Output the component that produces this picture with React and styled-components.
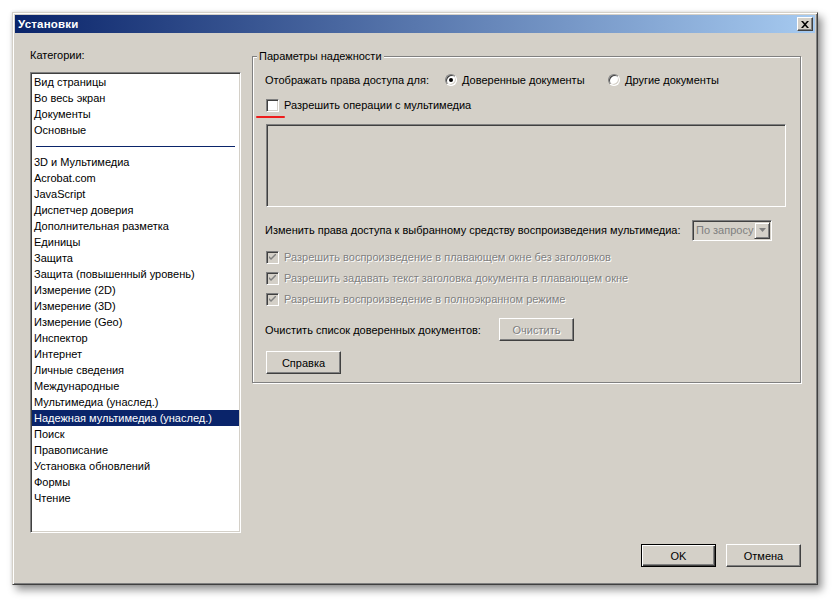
import React from "react";
import styled, { createGlobalStyle, css } from "styled-components";

const FACE = "#d4d0c8";

const GlobalStyle = createGlobalStyle`
  html, body { margin: 0; padding: 0; background: #ffffff; }
  body {
    font-family: "Liberation Sans", Arial, sans-serif;
    font-size: 11px;
    color: #000;
  }
  * { box-sizing: border-box; }
`;

const Page = styled.div`
  padding: 12px 0 0 12px;
  width: 839px;
  height: 605px;
`;

const Window = styled.div`
  width: 806px;
  height: 573px;
  background: ${FACE};
  border: 1px solid;
  border-color: ${FACE} #404040 #404040 ${FACE};
  box-shadow: inset 1px 1px #fff, inset -1px -1px #808080,
    4px 5px 8px rgba(0, 0, 0, 0.42), 0 0 3px rgba(0, 0, 0, 0.12);
  padding: 2px;
  display: flex;
  flex-direction: column;
`;

const TitleBar = styled.div`
  height: 18px;
  flex: none;
  display: flex;
  align-items: center;
  padding: 0 2px 0 3px;
  background: linear-gradient(to right, #0a246a, #a6caf0);
  color: #fff;
  font-weight: bold;
  font-size: 11.5px;
  letter-spacing: 0.2px;
`;

const CloseButton = styled.div`
  margin-left: auto;
  width: 16px;
  height: 14px;
  background: ${FACE};
  border: 1px solid;
  border-color: #fff #404040 #404040 #fff;
  box-shadow: inset -1px -1px #808080;
  display: flex;
  align-items: center;
  justify-content: center;
`;

const Main = styled.div`
  display: flex;
  padding: 15px 0 0 15px;
`;

const LeftColumn = styled.div`
  width: 211px;
  display: flex;
  flex-direction: column;
`;

const Label = styled.div`
  height: 14px;
  line-height: 14px;
  white-space: nowrap;
`;

const ListBox = styled.div`
  margin-top: 10px;
  height: 461px;
  background: #fff;
  border: 1px solid;
  border-color: #808080 #fff #fff #808080;
  box-shadow: inset 1px 1px #404040, inset -1px -1px ${FACE};
  padding: 1px;
  overflow: hidden;
`;

const ListItem = styled.div`
  height: 16px;
  line-height: 16px;
  padding-left: 2px;
  white-space: nowrap;
  ${(p) =>
    p.$selected &&
    css`
      background: #0a246a;
      color: #fff;
    `}
`;

const ListSeparator = styled.div`
  height: 16px;
  padding: 8px 4px 0 4px;
  &::after {
    content: "";
    display: block;
    height: 1px;
    background: #0a246a;
  }
`;

const RightColumn = styled.div`
  margin-left: 11px;
  width: 549px;
  padding-top: 8px;
`;

const GroupBox = styled.div`
  position: relative;
  border: 1px solid #808080;
  box-shadow: 1px 1px 0 #fff, inset 1px 1px 0 #fff;
  padding: 13px 13px 8px 12px;
`;

const GroupLegend = styled.span`
  position: absolute;
  top: -8px;
  left: 4px;
  padding: 0 2px;
  line-height: 14px;
  background: ${FACE};
  white-space: nowrap;
`;

const Row = styled.div`
  position: relative;
  display: flex;
  align-items: center;
  height: ${(p) => p.$h || 20}px;
  margin-top: ${(p) => p.$mt || 0}px;
  white-space: nowrap;
`;

const RowLabel = styled.span`
  width: ${(p) => (p.$w ? `${p.$w}px` : "auto")};
  flex: none;
  white-space: nowrap;
`;

const Option = styled.div`
  display: flex;
  align-items: center;
  width: ${(p) => (p.$w ? `${p.$w}px` : "auto")};
  flex: none;
`;

const Radio = styled.span`
  width: 12px;
  height: 12px;
  border-radius: 50%;
  background: #fff;
  border: 1px solid;
  border-color: #808080 #fff #fff #808080;
  box-shadow: inset 1px 1px #404040, inset -1px -1px ${FACE};
  display: flex;
  align-items: center;
  justify-content: center;
  flex: none;
  &::after {
    content: "";
    display: ${(p) => (p.$checked ? "block" : "none")};
    width: 4px;
    height: 4px;
    border-radius: 50%;
    background: #000;
  }
`;

const Box = styled.span`
  width: 13px;
  height: 13px;
  flex: none;
  margin-left: 1px;
  background: ${(p) => (p.$disabled ? FACE : "#fff")};
  border: 1px solid;
  border-color: #808080 #fff #fff #808080;
  box-shadow: inset 1px 1px #404040, inset -1px -1px ${FACE};
  display: flex;
  align-items: center;
  justify-content: center;
`;

const OptionText = styled.span`
  margin-left: ${(p) => p.$ml || 5}px;
  white-space: nowrap;
  ${(p) =>
    p.$disabled &&
    css`
      color: #808080;
      text-shadow: 1px 1px 0 #fff;
    `}
`;

const RedMark = styled.span`
  position: absolute;
  left: -9px;
  top: 21px;
  width: 29px;
  height: 2px;
  border-radius: 1px;
  background: #ee1c1c;
`;

const SunkenPanel = styled.div`
  margin: 9px 0 0 1px;
  width: 520px;
  height: 83px;
  border: 1px solid;
  border-color: #808080 #fff #fff #808080;
  box-shadow: inset 1px 1px #404040, inset -1px -1px ${FACE};
`;

const Select = styled.div`
  margin-left: auto;
  margin-right: 15px;
  width: 80px;
  height: 21px;
  border: 1px solid;
  border-color: #808080 #fff #fff #808080;
  box-shadow: inset 1px 1px #404040, inset -1px -1px ${FACE};
  padding: 1px 1px 1px 2px;
  display: flex;
  align-items: center;
  background: ${FACE};
`;

const SelectText = styled.span`
  flex: 1;
  padding-left: 1px;
  color: #808080;
  white-space: nowrap;
`;

const SelectArrow = styled.span`
  width: 16px;
  height: 17px;
  flex: none;
  background: ${FACE};
  border: 1px solid;
  border-color: ${FACE} #404040 #404040 ${FACE};
  box-shadow: inset 1px 1px #fff, inset -1px -1px #808080;
  display: flex;
  align-items: center;
  justify-content: center;
`;

const Button = styled.div`
  width: 75px;
  height: 23px;
  flex: none;
  display: flex;
  align-items: center;
  justify-content: center;
  background: ${FACE};
  border: 1px solid;
  border-color: #fff #404040 #404040 #fff;
  box-shadow: inset -1px -1px #808080;
  white-space: nowrap;
  margin-left: ${(p) => p.$ml || 0}px;
  ${(p) =>
    p.$default &&
    css`
      border: 1px solid #000;
      box-shadow: inset 1px 1px #fff, inset -1px -1px #404040,
        inset -2px -2px #808080;
    `}
  ${(p) =>
    p.$disabled &&
    css`
      color: #808080;
      text-shadow: 1px 1px 0 #fff;
    `}
`;

const Footer = styled.div`
  display: flex;
  justify-content: flex-end;
  gap: 10px;
  margin-top: 11px;
  padding-right: 14px;
`;

const CheckMark = ({ color }) => (
  <svg width="7" height="7" viewBox="0 0 7 7">
    <path d="M0 2 L0 4 L2 6 L7 1 L7 -1 L2 4 Z" fill={color} />
  </svg>
);

const categoriesTop = ["Вид страницы", "Во весь экран", "Документы", "Основные"];
const categories = [
  "3D и Мультимедиа",
  "Acrobat.com",
  "JavaScript",
  "Диспетчер доверия",
  "Дополнительная разметка",
  "Единицы",
  "Защита",
  "Защита (повышенный уровень)",
  "Измерение (2D)",
  "Измерение (3D)",
  "Измерение (Geo)",
  "Инспектор",
  "Интернет",
  "Личные сведения",
  "Международные",
  "Мультимедиа (унаслед.)",
  "Надежная мультимедиа (унаслед.)",
  "Поиск",
  "Правописание",
  "Установка обновлений",
  "Формы",
  "Чтение",
];
const SELECTED = "Надежная мультимедиа (унаслед.)";

const disabledOptions = [
  "Разрешить воспроизведение в плавающем окне без заголовков",
  "Разрешить задавать текст заголовка документа в плавающем окне",
  "Разрешить воспроизведение в полноэкранном режиме",
];

export default function App() {
  return (
    <Page>
      <GlobalStyle />
      <Window>
        <TitleBar>
          <span>Установки</span>
          <CloseButton>
            <svg width="8" height="7" viewBox="0 0 8 7">
              <path
                d="M0 0h2l2 2.2L6 0h2L5 3.5 8 7H6L4 4.8 2 7H0l3-3.5z"
                fill="#000"
              />
            </svg>
          </CloseButton>
        </TitleBar>
        <Main>
          <LeftColumn>
            <Label>Категории:</Label>
            <ListBox>
              {categoriesTop.map((c) => (
                <ListItem key={c}>{c}</ListItem>
              ))}
              <ListSeparator />
              {categories.map((c) => (
                <ListItem key={c} $selected={c === SELECTED}>
                  {c}
                </ListItem>
              ))}
            </ListBox>
          </LeftColumn>
          <RightColumn>
            <GroupBox>
              <GroupLegend>Параметры надежности</GroupLegend>
              <Row $h={20}>
                <RowLabel $w={180}>Отображать права доступа для:</RowLabel>
                <Option $w={163}>
                  <Radio $checked />
                  <OptionText>Доверенные документы</OptionText>
                </Option>
                <Option>
                  <Radio />
                  <OptionText>Другие документы</OptionText>
                </Option>
              </Row>
              <Row $h={20} $mt={5}>
                <Box />
                <OptionText>Разрешить операции с мультимедиа</OptionText>
                <RedMark />
              </Row>
              <SunkenPanel />
              <Row $h={22} $mt={12}>
                <RowLabel>
                  Изменить права доступа к выбранному средству воспроизведения
                  мультимедиа:
                </RowLabel>
                <Select>
                  <SelectText>По запросу</SelectText>
                  <SelectArrow>
                    <svg width="7" height="4" viewBox="0 0 7 4">
                      <path d="M0 0h7L3.5 4z" fill="#808080" />
                    </svg>
                  </SelectArrow>
                </Select>
              </Row>
              {disabledOptions.map((t, i) => (
                <Row key={t} $h={20} $mt={i === 0 ? 6 : 1}>
                  <Box $disabled>
                    <CheckMark color="#808080" />
                  </Box>
                  <OptionText $disabled>{t}</OptionText>
                </Row>
              ))}
              <Row $h={23} $mt={9}>
                <RowLabel $w={234}>Очистить список доверенных документов:</RowLabel>
                <Button $disabled>Очистить</Button>
              </Row>
              <Row $h={23} $mt={10}>
                <Button $ml={1}>Справка</Button>
              </Row>
            </GroupBox>
          </RightColumn>
        </Main>
        <Footer>
          <Button $default>OK</Button>
          <Button>Отмена</Button>
        </Footer>
      </Window>
    </Page>
  );
}
